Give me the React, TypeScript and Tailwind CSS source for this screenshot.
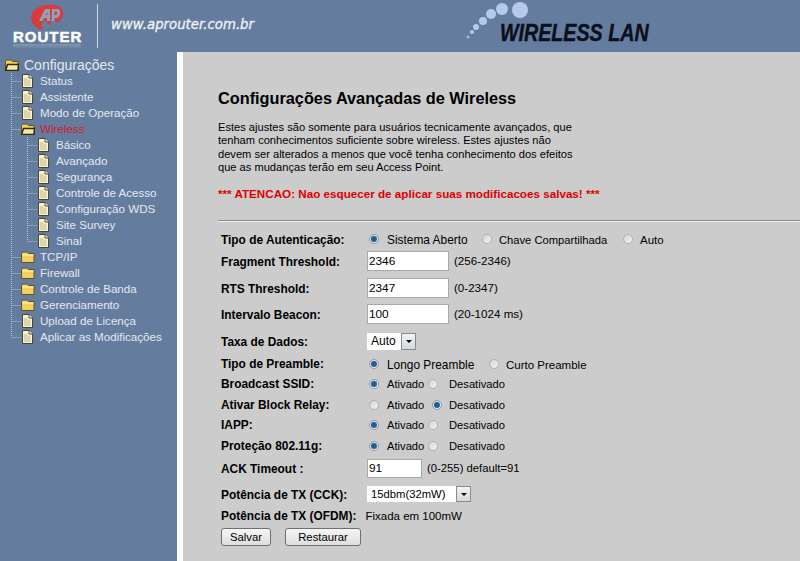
import React from "react";

const C = "#647d9e";

function Page() {
  return (
    <svg width="11" height="14" viewBox="0 0 11 14" className="shrink-0">
      <path d="M.5 .5H7L10.500 4V13.500H.5Z" fill="#fbf3c8" stroke="#45453a" />
      <path d="M7 .5V4H10.500" fill="#fff" stroke="#45453a" />
      <path d="M2 5H6M2 7H8.500M2 9H8.500M2 11H8.500" stroke="#bdb594" />
    </svg>
  );
}

function Folder({ open }: { open?: boolean }) {
  return (
    <svg width="14" height="12" viewBox="0 0 14 12" className="shrink-0">
      <path d="M.5 2.500 2 1H6L7.500 2.500H13V11.500H.5Z" fill="#f0cf5c" stroke="#5a5228" />
      {open ? (
        <path d="M.5 11.500 2.500 5.500H13.500L13 11.500Z" fill="#fbe98f" stroke="#2c2810" strokeWidth="1.500" />
      ) : (
        <path d="M1.500 4H12.500" stroke="#fdf4c0" />
      )}
    </svg>
  );
}

type Row = { t: string; l: 1 | 2; k: "p" | "f" | "o"; red?: boolean; last?: boolean };

const rows: Row[] = [
  { t: "Status", l: 1, k: "p" },
  { t: "Assistente", l: 1, k: "p" },
  { t: "Modo de Operação", l: 1, k: "p" },
  { t: "Wireless", l: 1, k: "o", red: true },
  { t: "Básico", l: 2, k: "p" },
  { t: "Avançado", l: 2, k: "p" },
  { t: "Segurança", l: 2, k: "p" },
  { t: "Controle de Acesso", l: 2, k: "p" },
  { t: "Configuração WDS", l: 2, k: "p" },
  { t: "Site Survey", l: 2, k: "p" },
  { t: "Sinal", l: 2, k: "p", last: true },
  { t: "TCP/IP", l: 1, k: "f" },
  { t: "Firewall", l: 1, k: "f" },
  { t: "Controle de Banda", l: 1, k: "f" },
  { t: "Gerenciamento", l: 1, k: "f" },
  { t: "Upload de Licença", l: 1, k: "p" },
  { t: "Aplicar as Modificações", l: 1, k: "p", last: true },
];

function Connector({ l, last }: { l: 1 | 2; last?: boolean }) {
  const w = l === 1 ? 21 : 37;
  const x = l === 1 ? 11.5 : 27.5;
  const isFinalRoot = l === 1 && last;
  return (
    <svg width={w} height="16" viewBox={`0 0 ${w} 16`} className="shrink-0">
      <g stroke="#b8c2d0" strokeDasharray="1 1" fill="none">
        <path d={isFinalRoot ? "M11.500 0V8" : "M11.500 0V16"} />
        {l === 2 && <path d={last ? "M27.500 0V8" : "M27.500 0V16"} />}
        <path d={`M${x} 8.500H${w}`} />
      </g>
    </svg>
  );
}

function Tree() {
  return (
    <div className="w-[177px] shrink-0 pt-[5px] text-[11.6px] text-[#e4e8ee]">
      <div className="flex h-4 items-center pl-[5px] text-[14px]">
        <Folder open />
        <span className="ml-[5px]">Configurações</span>
      </div>
      {rows.map((r) => (
        <div key={r.t} className="flex h-4 items-center">
          <Connector l={r.l} last={r.last} />
          <span className="flex w-[13px] justify-center">
            {r.k === "p" ? <Page /> : <Folder open={r.k === "o"} />}
          </span>
          <span className={`ml-[6px] whitespace-nowrap ${r.red ? "text-[#d8192c]" : ""}`}>{r.t}</span>
        </div>
      ))}
    </div>
  );
}

function Radio({ on }: { on?: boolean }) {
  return (
    <span
      className={`flex h-[10px] w-[10px] shrink-0 items-center justify-center rounded-full border bg-gradient-to-br from-[#d4d4d4] to-[#f4f4f4] ${
        on ? "border-[#8f9aa6]" : "border-[#b0b0b0]"
      }`}
    >
      {on && <span className="h-[6px] w-[6px] rounded-full bg-[#1f5f96]" />}
    </span>
  );
}

function Opt({ on, label, gap, w, size }: { on?: boolean; label: string; gap: string; w: string; size: string }) {
  return (
    <span className={`flex items-center ${w} ${gap}`}>
      <Radio on={on} />
      <span className={`whitespace-nowrap ${size}`}>{label}</span>
    </span>
  );
}

function FormRow({
  label,
  h,
  high,
  children,
}: {
  label: string;
  h: string;
  high?: boolean;
  children: React.ReactNode;
}) {
  return (
    <div className={`flex items-center ${h}`}>
      <b className={`w-[146px] shrink-0 text-[11.9px] leading-[14px] font-bold whitespace-nowrap ${high ? "" : "pt-[2px]"}`}>
        {label}
      </b>
      <div className="flex items-center">{children}</div>
    </div>
  );
}

function Text({ value, w, h = "h-[20px]" }: { value: string; w: string; h?: string }) {
  return (
    <input
      readOnly
      value={value}
      className={`${h} ${w} border border-[#a9a9a9] bg-white pl-[1px] text-[11.8px] text-black outline-none`}
    />
  );
}

function Sel({ value, w, h, size }: { value: string; w: string; h: string; size: string }) {
  return (
    <div className={`flex ${h} ${w} items-center justify-between bg-white pl-[4px]`}>
      <span className={`whitespace-nowrap ${size}`}>{value}</span>
      <span className="flex h-full w-[15px] items-center justify-center border border-[#8a8a8a] bg-gradient-to-b from-[#f0f2f5] to-[#d4d8de]">
        <span className="h-0 w-0 border-x-[3px] border-t-[3px] border-x-transparent border-t-black" />
      </span>
    </div>
  );
}

function Btn({ label, w }: { label: string; w: string }) {
  return (
    <button
      className={`h-[18px] ${w} rounded-[3px] border border-[#6f6f6f] bg-gradient-to-b from-[#f6f6f6] to-[#dedede] text-[11.3px] text-black`}
    >
      {label}
    </button>
  );
}

function Logo() {
  return (
    <div className="w-[68px] text-center">
      <svg width="34" height="26" viewBox="0 0 34 26" className="mx-auto block">
        <path
          d="M1 13C2 5 10 1 18 1C26 0 33 3 33 9C33 14 30 17 26 19L25 15L21 15L20 22L15 16L11 20L13 26C7 25 1 20 1 13Z"
          fill="#dc3a3a"
        />
        <path
          d="M9 17L15 5H20L20 17H17L17 14H14L12.500 17ZM15.500 11H17.500V8ZM22 5H28C31 5 31 13 27 14H24.500L24 17H21.500ZM24.500 7.500H26.500C27.500 7.500 27.500 11 26 11H24.500Z"
          fill="#8fa2bd"
          fillRule="evenodd"
        />
      </svg>
      <div className="h-[14px] text-[15px] leading-[14px] font-bold tracking-[1px] whitespace-nowrap text-white [-webkit-text-stroke:0.5px_white]">
        ROUTER
      </div>
      <div className="h-[5px] bg-gradient-to-b from-[#8597b0] to-[#647d9e]" />
    </div>
  );
}

function Dots() {
  return (
    <svg width="66" height="42" viewBox="0 0 66 42" className="shrink-0">
      <g fill="#b6caec">
        <circle cx="2" cy="35" r="1.500" fill="#a8bbd8" />
        <circle cx="6" cy="30" r="2" />
        <circle cx="10" cy="25" r="3" />
        <circle cx="17" cy="19" r="4" />
        <circle cx="25" cy="12" r="5" />
        <circle cx="36" cy="7" r="6" />
        <circle cx="54" cy="8" r="8" />
      </g>
    </svg>
  );
}

const lower = "pt-[2px] leading-[14px]";

export default function App() {
  return (
    <div
      className="h-[561px] w-[800px] overflow-hidden text-[12px] text-black [font-family:'Liberation_Sans',Arial,sans-serif]"
      style={{ backgroundColor: C }}
    >
      <header className="flex h-[52px] items-start overflow-hidden pl-[13px]">
        <div className="pt-[4px]">
          <Logo />
        </div>
        <div className="mt-[4px] ml-[16px] h-[44px] w-[1px] bg-[#cfd6e0]" />
        <div className="mt-[15px] ml-[13px] w-[143px] text-[13.3px] leading-[20px] whitespace-nowrap text-[#f0f2f5] italic [-webkit-text-stroke:0.3px_#f0f2f5] [font-family:'DejaVu_Sans',sans-serif]">
          www.aprouter.com.br
        </div>
        <div className="mt-[2px] ml-[212px] flex items-start">
          <Dots />
          <div className="mt-[17px] -ml-[32px] origin-left [transform:scaleX(.855)] text-[23px] leading-[28px] font-bold whitespace-nowrap text-[#0a0f1c] italic [-webkit-text-stroke:0.4px_#0a0f1c]">
            WIRELESS LAN
          </div>
        </div>
      </header>
      <div className="flex h-[509px]">
        <Tree />
        <main className="flex-1 border-l-[6px] border-white bg-[#cccccc] pt-[37px]">
          <div className="pl-[35px]">
            <h1 className="text-[16.3px] leading-[18px] font-bold">Configurações Avançadas de Wireless</h1>
            <p className="mt-[14px] text-[11.12px] leading-[13.25px]">
              Estes ajustes são somente para usuários tecnicamente avançados, que
              <br />
              tenham conhecimentos suficiente sobre wireless. Estes ajustes não
              <br />
              devem ser alterados a menos que você tenha conhecimento dos efeitos
              <br />
              que as mudanças terão em seu Access Point.
            </p>
            <p className="mt-[13px] text-[11.67px] leading-[14px] font-bold text-[#e00000]">
              *** ATENCAO: Nao esquecer de aplicar suas modificacoes salvas! ***
            </p>
          </div>
          <div className="mt-[19px] ml-[35px] h-[2px] border-t border-b border-t-[#8a8a8a] border-b-[#eeeeee]" />
          <div className="mt-[6px] pl-[38px]">
            <FormRow label="Tipo de Autenticação:" h="h-[22px]">
              <span className="ml-[2px]" />
              <Opt on label="Sistema Aberto" gap="gap-[8px]" w="w-[113px]" size={`text-[11.9px] ${lower}`} />
              <Opt label="Chave Compartilhada" gap="gap-[7px]" w="w-[141px]" size={`text-[11.2px] ${lower}`} />
              <Opt label="Auto" gap="gap-[7px]" w="" size={`text-[11.5px] ${lower}`} />
            </FormRow>
            <FormRow label="Fragment Threshold:" h="h-[22px]">
              <Text value="2346" w="w-[82px]" />
              <span className="ml-[5px] text-[11.6px]">(256-2346)</span>
            </FormRow>
            <FormRow label="RTS Threshold:" h="h-[32px]">
              <Text value="2347" w="w-[82px]" />
              <span className="ml-[5px] text-[11.6px]">(0-2347)</span>
            </FormRow>
            <FormRow label="Intervalo Beacon:" h="h-[20px]">
              <Text value="100" w="w-[82px]" />
              <span className="ml-[5px] text-[11.6px]">(20-1024 ms)</span>
            </FormRow>
            <FormRow label="Taxa de Dados:" h="h-[34px]">
              <Sel value="Auto" w="w-[49px]" h="h-[17px]" size="text-[12px]" />
            </FormRow>
            <FormRow label="Tipo de Preamble:" h="h-[12px]" high>
              <span className="ml-[2px]" />
              <Opt on label="Longo Preamble" gap="gap-[8px]" w="w-[120px]" size={`text-[11.9px] ${lower}`} />
              <Opt label="Curto Preamble" gap="gap-[7px]" w="" size={`text-[11.5px] ${lower}`} />
            </FormRow>
            <FormRow label="Broadcast SSID:" h="h-[28px]" high>
              <span className="ml-[2px]" />
              <Opt on label="Ativado" gap="gap-[8px]" w="w-[59px]" size="text-[11.2px]" />
              <Opt label="Desativado" gap="gap-[11px]" w="" size="text-[11.2px]" />
            </FormRow>
            <FormRow label="Ativar Block Relay:" h="h-[14px]" high>
              <span className="ml-[2px]" />
              <Opt label="Ativado" gap="gap-[8px]" w="w-[63px]" size="text-[11.2px]" />
              <Opt on label="Desativado" gap="gap-[7px]" w="" size="text-[11.2px]" />
            </FormRow>
            <FormRow label="IAPP:" h="h-[26px]" high>
              <span className="ml-[2px]" />
              <Opt on label="Ativado" gap="gap-[8px]" w="w-[59px]" size="text-[11.2px]" />
              <Opt label="Desativado" gap="gap-[11px]" w="" size="text-[11.2px]" />
            </FormRow>
            <FormRow label="Proteção 802.11g:" h="h-[16px]" high>
              <span className="ml-[2px]" />
              <Opt on label="Ativado" gap="gap-[8px]" w="w-[59px]" size="text-[11.2px]" />
              <Opt label="Desativado" gap="gap-[11px]" w="" size="text-[11.2px]" />
            </FormRow>
            <FormRow label="ACK Timeout :" h="h-[28px]">
              <Text value="91" w="w-[55px]" h="h-[19px]" />
              <span className="ml-[5px] text-[11.3px]">(0-255) default=91</span>
            </FormRow>
            <FormRow label="Potência de TX (CCK):" h="h-[24px]">
              <Sel value="15dbm(32mW)" w="w-[104px]" h="h-[16px]" size="text-[11.25px]" />
            </FormRow>
            <div className="flex h-[18px] items-center">
              <b className="pt-[2px] text-[11.9px] leading-[14px] font-bold whitespace-nowrap">Potência de TX (OFDM):</b>
              <span className={`ml-[9px] text-[11.5px] ${lower}`}>Fixada em 100mW</span>
            </div>
            <div className="mt-[4px] flex gap-[14px]">
              <Btn label="Salvar" w="w-[50px]" />
              <Btn label="Restaurar" w="w-[76px]" />
            </div>
          </div>
        </main>
      </div>
    </div>
  );
}
